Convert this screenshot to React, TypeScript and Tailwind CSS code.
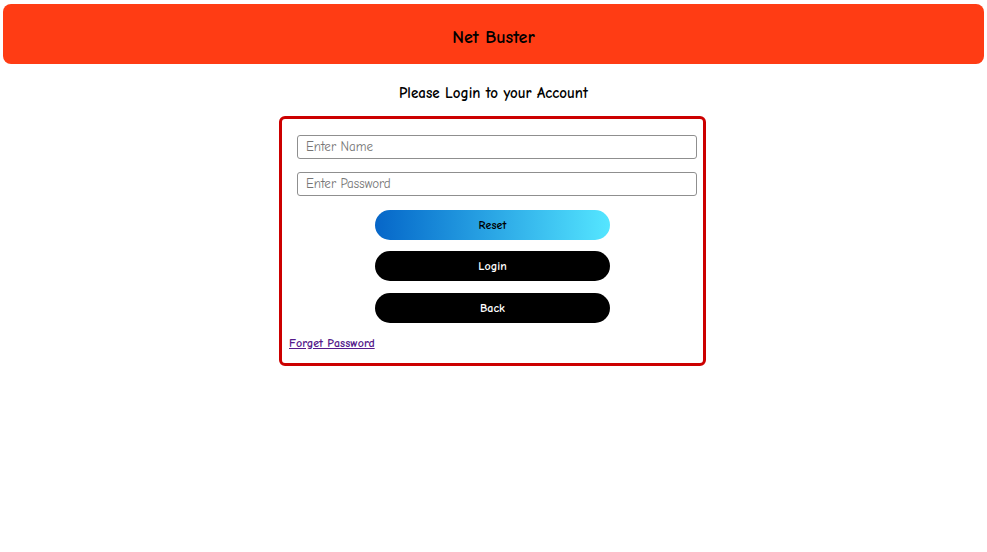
import React from 'react';

const font = { fontFamily: '"Comic Sans MS", "Comic Neue", "DejaVu Sans", sans-serif' };

export default function App() {
  return (
    <div className="min-h-[552px] bg-white pt-1 px-[3px]" style={font}>
      <div className="h-[60px] rounded-lg bg-[#ff3c14] flex items-center justify-center pt-[6px]">
        <h1 className="text-[18px] font-bold text-black">Net Buster</h1>
      </div>
      <h2 className="mt-[18px] text-center text-[15px] font-bold text-black">
        Please Login to your Account
      </h2>
      <div className="mt-[11.5px] mx-auto w-[427px] h-[250px] border-[3px] border-[#cc0000] rounded-md pl-[7px] pt-[15.5px] -translate-x-px">
        <div className="flex flex-col gap-[13px] pl-[8px]">
          <input
            className="w-[400px] h-[24px] border border-[#8f8f8f] rounded-[3px] px-2 text-[13px] text-black placeholder:text-[#757575] outline-none"
            placeholder="Enter Name"
            style={font}
          />
          <input
            type="password"
            className="w-[400px] h-[24px] border border-[#8f8f8f] rounded-[3px] px-2 text-[13px] text-black placeholder:text-[#757575] outline-none"
            placeholder="Enter Password"
            style={font}
          />
        </div>
        <div className="flex flex-col items-center gap-[11.5px] mt-[14px] pr-[7px]">
          <button
            className="w-[235px] h-[30px] rounded-full bg-gradient-to-r from-[#0766c8] to-[#55e6ff] text-[12px] font-bold text-black"
            style={font}
          >
            Reset
          </button>
          <button className="w-[235px] h-[30px] rounded-full bg-black text-[12px] font-bold text-white" style={font}>
            Login
          </button>
          <button className="w-[235px] h-[30px] rounded-full bg-black text-[12px] font-bold text-white" style={font}>
            Back
          </button>
        </div>
        <a href="#" className="block mt-[14px] text-[12px] font-bold text-[#551a8b] underline leading-none">
          Forget Password
        </a>
      </div>
    </div>
  );
}
